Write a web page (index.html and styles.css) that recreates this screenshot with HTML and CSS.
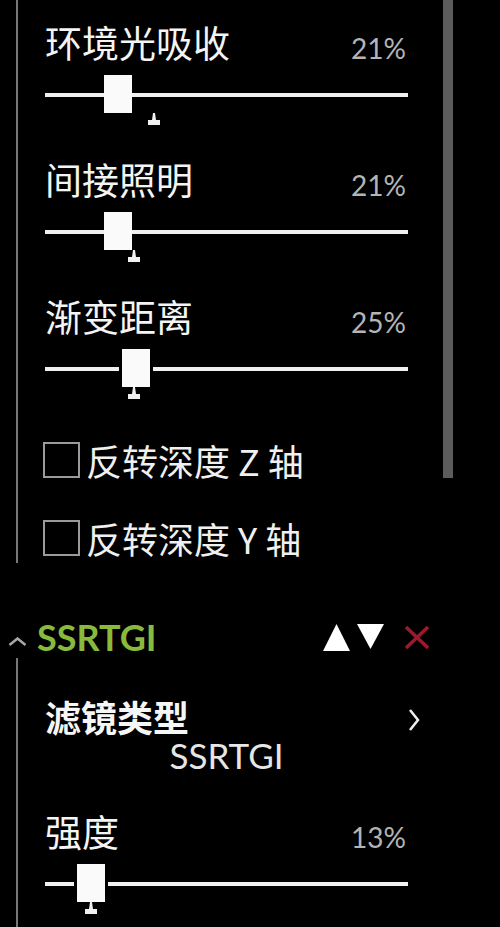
FILE: index.html
```html
<!DOCTYPE html>
<html lang="zh-CN">
<head>
<meta charset="utf-8">
<link rel="stylesheet" href="styles.css">
</head>
<body>
<div class="panel">
  <div class="panel-content">
    <div class="slider">
      <div class="slider-head"><span class="label">环境光吸收</span><span class="value">21%</span></div>
      <div class="bar" style="--thumb:59px;--tick:103px"><div class="line"></div><div class="thumb"></div><svg class="tick" viewBox="0 0 12 12"><polygon points="5,0 7,0 8,7 12,7 12,12 0,12 0,7 4,7"/></svg></div>
    </div>
    <div class="slider">
      <div class="slider-head"><span class="label">间接照明</span><span class="value">21%</span></div>
      <div class="bar" style="--thumb:59px;--tick:83px"><div class="line"></div><div class="thumb"></div><svg class="tick" viewBox="0 0 12 12"><polygon points="5,0 7,0 8,7 12,7 12,12 0,12 0,7 4,7"/></svg></div>
    </div>
    <div class="slider">
      <div class="slider-head"><span class="label">渐变距离</span><span class="value">25%</span></div>
      <div class="bar" style="--thumb:77px;--tick:83px"><div class="line"></div><div class="thumb gap"></div><svg class="tick" viewBox="0 0 12 12"><polygon points="5,0 7,0 8,7 12,7 12,12 0,12 0,7 4,7"/></svg></div>
    </div>
    <label class="check"><span class="box"></span><span class="check-text">反转深度 Z 轴</span></label>
    <label class="check"><span class="box"></span><span class="check-text">反转深度 Y 轴</span></label>
  </div>
  <div class="scrollbar"></div>
</div>

<div class="group-head">
  <svg class="caret" viewBox="0 0 19 9"><polyline points="1.5,8 9.5,1.5 17.5,8"/></svg>
  <span class="group-title">SSRTGI</span>
  <div class="group-actions">
    <svg class="act" viewBox="0 0 27 27"><polygon points="13.5,0 27,27 0,27"/></svg>
    <svg class="act" viewBox="0 0 27 27"><polygon points="0,0 27,0 13.5,25"/></svg>
    <svg class="act close" viewBox="0 0 30 27"><line x1="4" y1="3" x2="26" y2="24"/><line x1="26" y1="3" x2="4" y2="24"/></svg>
  </div>
</div>

<div class="group-body">
  <div class="filter-row">
    <span class="filter-label">滤镜类型</span>
    <svg class="chev" viewBox="0 0 12 24"><polyline points="2,2 10,12 2,22"/></svg>
  </div>
  <div class="filter-value">SSRTGI</div>
  <div class="slider">
    <div class="slider-head"><span class="label">强度</span><span class="value">13%</span></div>
    <div class="bar" style="--thumb:32px;--tick:40px"><div class="line"></div><div class="thumb gap"></div><svg class="tick" viewBox="0 0 12 12"><polygon points="5,0 7,0 8,7 12,7 12,12 0,12 0,7 4,7"/></svg></div>
  </div>
</div>
</body>
</html>
```
FILE: styles.css
```css
html, body {
  margin: 0;
  padding: 0;
  background: #000;
}
body {
  width: 500px;
  height: 927px;
  overflow: hidden;
  font-family: "Noto Sans CJK SC", "Lato", sans-serif;
  color: #f2f2f2;
}

.panel {
  display: flex;
  align-items: flex-start;
  margin-left: 16px;
  border-left: 2px solid #777;
}
.panel-content {
  width: 363px;
  padding-left: 27px;
  padding-top: 24px;
}
.scrollbar {
  width: 10px;
  height: 478px;
  margin-left: 35px;
  background: #5c5c5c;
}

.slider {
  height: 137px;
}
.slider-head {
  height: 50px;
  display: flex;
  justify-content: space-between;
  align-items: flex-start;
}
.label {
  font-size: 37px;
  line-height: 37px;
  color: #f4f4f4;
}
.value {
  font-family: "Lato", sans-serif;
  font-size: 28px;
  line-height: 28px;
  margin-top: 10px;
  margin-right: 2px;
  color: #b4b4b4;
}
.bar {
  position: relative;
  height: 40px;
}
.line {
  position: absolute;
  left: 0;
  right: 0;
  top: 19px;
  height: 4px;
  background: #f0f0f0;
}
.thumb {
  position: absolute;
  left: var(--thumb);
  top: 1px;
  width: 28px;
  height: 38px;
  background: #fafafa;
}
.thumb.gap {
  box-shadow: 0 0 0 3px #000;
}
.tick {
  position: absolute;
  left: var(--tick);
  top: 39px;
  width: 12px;
  height: 12px;
  fill: #f0f0f0;
}

.check {
  display: flex;
  align-items: center;
  height: 50px;
  margin-bottom: 28px;
}
.check:last-child {
  margin-bottom: 0;
}
.box {
  width: 33px;
  height: 32px;
  border: 2px solid #9a9a9a;
  margin-right: 6px;
  margin-left: -2px;
  flex: none;
}
.check-text {
  font-size: 36px;
  line-height: 36px;
  color: #f0f0f0;
  white-space: pre;
}

.group-head {
  display: flex;
  align-items: center;
  height: 42px;
  margin-top: 53px;
}
.caret {
  width: 19px;
  height: 9px;
  margin-left: 8px;
  margin-top: 8px;
  fill: none;
  stroke: #a8a8a8;
  stroke-width: 2.5;
}
.group-title {
  margin-left: 10px;
  font-family: "Lato", sans-serif;
  font-weight: 700;
  font-size: 36px;
  line-height: 38px;
  color: #88ba3c;
}
.group-actions {
  display: flex;
  align-items: center;
  margin-left: auto;
  margin-right: 68px;
}
.act {
  width: 27px;
  height: 27px;
  fill: #fff;
  margin-left: 7px;
}
.act.close {
  width: 30px;
  margin-left: 18px;
  stroke: #9c1a2e;
  stroke-width: 3.5;
  filter: blur(0.7px);
}

.group-body {
  box-sizing: border-box;
  margin-left: 16px;
  border-left: 2px solid #777;
  padding-left: 27px;
  padding-top: 39px;
  width: 392px;
  height: 270px;
}
.filter-row {
  display: flex;
  justify-content: space-between;
  align-items: center;
  width: 375px;
  height: 37px;
}
.filter-label {
  font-size: 36px;
  line-height: 36px;
  font-weight: 700;
  color: #f6f6f6;
}
.chev {
  width: 12px;
  height: 24px;
  margin-top: 8px;
  fill: none;
  stroke: #f0f0f0;
  stroke-width: 2.5;
}
.filter-value {
  width: 363px;
  margin-top: 2px;
  text-align: center;
  font-family: "Lato", sans-serif;
  font-size: 35px;
  line-height: 38px;
  color: #e6e6e6;
}
.group-body .slider {
  width: 363px;
  height: auto;
  margin-top: 39px;
}
```
